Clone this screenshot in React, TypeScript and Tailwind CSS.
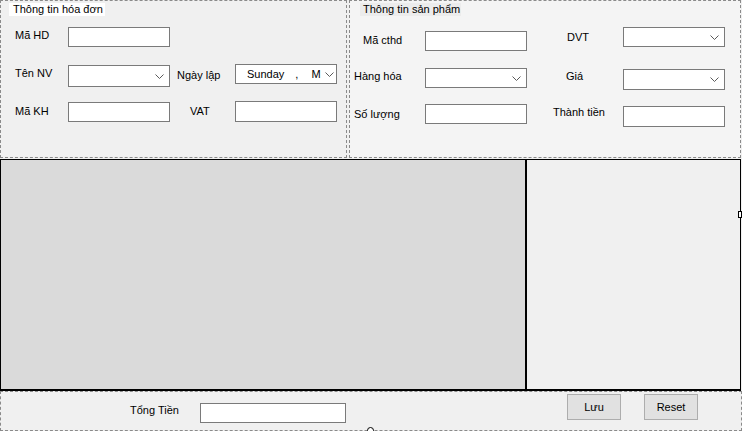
import React from "react";

const Chevron = () => (
  <svg width="9" height="5" viewBox="0 0 9 5" className="shrink-0">
    <path d="M0.5 0.5 L4.5 4.5 L8.5 0.5" fill="none" stroke="#5a5a5a" strokeWidth="1" />
  </svg>
);

const TextBox = ({ cls }: { cls: string }) => (
  <div className={`shrink-0 bg-white border border-[#7a7a7a] ${cls}`} />
);

const Combo = ({ cls }: { cls: string }) => (
  <div className={`shrink-0 bg-white border border-[#7a7a7a] flex items-center justify-end pr-[5px] ${cls}`}>
    <Chevron />
  </div>
);

export default function App() {
  return (
    <div
      className="relative w-[742px] h-[431px] bg-[#f0f0f0] text-[11px] leading-[13px] text-black overflow-hidden"
      style={{ fontFamily: '"Liberation Sans", Arial, sans-serif' }}
    >
      {/* top */}
      <div className="flex h-[158px] gap-[2px]">
        {/* left group */}
        <div className="w-[347px] h-[158px] border border-dashed border-[#8a8a8a] bg-[#f0f0f0] flex flex-col">
          <div className="mt-[2px] ml-[8px] w-[96px] h-[13px] bg-white pl-[4px] leading-[12px] whitespace-nowrap">
            Thông tin hóa đơn
          </div>
          {/* row1 */}
          <div className="flex items-start mt-[11px] h-[21px]">
            <div className="ml-[14px] w-[53px] mt-[2px]">Mã HD</div>
            <TextBox cls="w-[102px] h-[20px]" />
          </div>
          {/* row2 */}
          <div className="flex items-start mt-[15px] h-[24px]">
            <div className="ml-[14px] w-[53px] mt-[4px]">Tên NV</div>
            <Combo cls="w-[102px] h-[22px] mt-[2px]" />
            <div className="w-[65px] pl-[7px] mt-[6px] whitespace-nowrap">Ngày lập</div>
            <div className="shrink-0 w-[102px] h-[20px] mt-[1px] bg-white border border-[#7a7a7a] flex items-center pr-[4px]">
              <span className="ml-[11px]">Sunday</span>
              <span className="ml-[11px]">,</span>
              <span className="ml-[13px]">M</span>
              <span className="ml-[4px] mt-[1px]"><Chevron /></span>
            </div>
          </div>
          {/* row3 */}
          <div className="flex items-start mt-[14px] h-[21px]">
            <div className="ml-[14px] w-[53px] mt-[4px]">Mã KH</div>
            <TextBox cls="w-[102px] h-[20px] mt-[1px]" />
            <div className="w-[65px] pl-[20px] mt-[4px]">VAT</div>
            <TextBox cls="w-[102px] h-[21px]" />
          </div>
        </div>

        {/* right group */}
        <div className="w-[392px] h-[158px] border border-dashed border-[#8a8a8a] bg-[#f4f4f4] flex flex-col">
          <div className="mt-[2px] ml-[10px] w-[101px] h-[13px] bg-[#ececec] pl-[3px] leading-[12px] whitespace-nowrap">
            Thông tin sản phẩm
          </div>
          {/* row1 */}
          <div className="flex items-start mt-[11px] h-[24px]">
            <div className="w-[75px] pl-[13px] mt-[7px] whitespace-nowrap">Mã cthd</div>
            <TextBox cls="w-[102px] h-[20px] mt-[4px]" />
            <div className="w-[96px] pl-[40px] mt-[4px]">DVT</div>
            <Combo cls="w-[102px] h-[20px]" />
          </div>
          {/* row2 */}
          <div className="flex items-start mt-[17px] h-[22px]">
            <div className="w-[75px] pl-[4px] mt-[2px] whitespace-nowrap">Hàng hóa</div>
            <Combo cls="w-[102px] h-[20px]" />
            <div className="w-[96px] pl-[39px] mt-[2px]">Giá</div>
            <Combo cls="w-[102px] h-[21px] mt-[1px]" />
          </div>
          {/* row3 */}
          <div className="flex items-start mt-[13px] h-[24px]">
            <div className="w-[75px] pl-[4px] mt-[5px] whitespace-nowrap">Số lượng</div>
            <TextBox cls="w-[102px] h-[20px] mt-[1px]" />
            <div className="w-[96px] pl-[26px] mt-[3px] whitespace-nowrap">Thành tiền</div>
            <TextBox cls="w-[102px] h-[21px] mt-[3px]" />
          </div>
        </div>
      </div>

      {/* middle */}
      <div className="mt-[1px] w-[741px] h-[232px] flex border-t border-l border-r border-b-2 border-black">
        <div className="w-[526px] h-full bg-[#dadada] border-r-2 border-black" />
        <div className="flex-1 h-full bg-[#f0f0f0]" />
      </div>

      {/* bottom */}
      <div className="w-[742px] h-[40px] border border-dashed border-[#8a8a8a] bg-[#f0f0f0] flex items-start">
        <div className="ml-[129px] w-[70px] mt-[12px] whitespace-nowrap">Tổng Tiền</div>
        <TextBox cls="w-[146px] h-[20px] mt-[11px]" />
        <button className="ml-[221px] mt-[2px] w-[54px] h-[26px] bg-[#e1e1e1] border border-[#adadad] flex items-center justify-center">
          Lưu
        </button>
        <button className="ml-[23px] mt-[2px] w-[54px] h-[26px] bg-[#e1e1e1] border border-[#adadad] flex items-center justify-center">
          Reset
        </button>
      </div>

      {/* designer handles */}
      <div className="absolute left-[738px] top-[211px] w-[4px] h-[7px] bg-white border border-black" />
      <div className="absolute left-[367px] top-[427px] w-[7px] h-[7px] rounded-full bg-white border border-black" />
    </div>
  );
}
